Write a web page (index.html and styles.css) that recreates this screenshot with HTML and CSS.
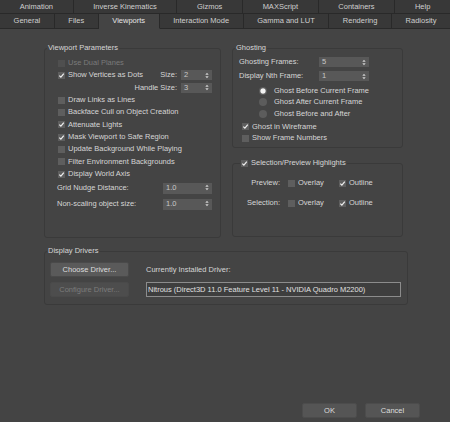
FILE: index.html
```html
<!DOCTYPE html>
<html lang="en">
<head>
  <meta charset="UTF-8">
  <title>Preference Settings - Viewports</title>
  <link rel="stylesheet" href="styles.css">
</head>
<body>

  <div class="tabs">
    <div class="tab-row">
      <div class="tab">Animation</div>
      <div class="tab">Inverse Kinematics</div>
      <div class="tab">Gizmos</div>
      <div class="tab">MAXScript</div>
      <div class="tab">Containers</div>
      <div class="tab">Help</div>
    </div>
    <div class="tab-row">
      <div class="tab">General</div>
      <div class="tab">Files</div>
      <div class="tab active">Viewports</div>
      <div class="tab">Interaction Mode</div>
      <div class="tab">Gamma and LUT</div>
      <div class="tab">Rendering</div>
      <div class="tab">Radiosity</div>
    </div>
  </div>

  <div class="content">
    <div class="top">

      <fieldset class="group viewport">
        <legend>Viewport Parameters</legend>
        <div class="vp-body">
          <div class="check-row disabled"><span class="box"></span>Use Dual Planes</div>
          <div class="check-row">
            <span class="box on"><svg viewBox="0 0 7 7"><path d="M1.3 3.6 2.9 5.1 5.8 1.7"/></svg></span>Show Vertices as Dots
            <span class="spin-label push">Size:</span>
            <span class="spinner small">2<i class="arrows"><svg viewBox="0 0 5 8"><path d="M2.5 0.5 4.6 3.2H0.4Z M2.5 7.5 4.6 4.8H0.4Z"/></svg></i></span>
          </div>
          <div class="check-row end">
            <span class="spin-label">Handle Size:</span>
            <span class="spinner small">3<i class="arrows"><svg viewBox="0 0 5 8"><path d="M2.5 0.5 4.6 3.2H0.4Z M2.5 7.5 4.6 4.8H0.4Z"/></svg></i></span>
          </div>
          <div class="check-row"><span class="box"></span>Draw Links as Lines</div>
          <div class="check-row"><span class="box"></span>Backface Cull on Object Creation</div>
          <div class="check-row"><span class="box on"><svg viewBox="0 0 7 7"><path d="M1.3 3.6 2.9 5.1 5.8 1.7"/></svg></span>Attenuate Lights</div>
          <div class="check-row"><span class="box on"><svg viewBox="0 0 7 7"><path d="M1.3 3.6 2.9 5.1 5.8 1.7"/></svg></span>Mask Viewport to Safe Region</div>
          <div class="check-row"><span class="box"></span>Update Background While Playing</div>
          <div class="check-row"><span class="box"></span>Filter Environment Backgrounds</div>
          <div class="check-row"><span class="box on"><svg viewBox="0 0 7 7"><path d="M1.3 3.6 2.9 5.1 5.8 1.7"/></svg></span>Display World Axis</div>
          <div class="field-row">
            <span>Grid Nudge Distance:</span>
            <span class="spinner wide">1.0<i class="arrows"><svg viewBox="0 0 5 8"><path d="M2.5 0.5 4.6 3.2H0.4Z M2.5 7.5 4.6 4.8H0.4Z"/></svg></i></span>
          </div>
          <div class="field-row">
            <span>Non-scaling object size:</span>
            <span class="spinner wide">1.0<i class="arrows"><svg viewBox="0 0 5 8"><path d="M2.5 0.5 4.6 3.2H0.4Z M2.5 7.5 4.6 4.8H0.4Z"/></svg></i></span>
          </div>
        </div>
      </fieldset>

      <div class="right-col">
        <fieldset class="group ghosting">
          <legend>Ghosting</legend>
          <div class="gh-body">
            <div class="gh-row">
              <span class="gh-label">Ghosting Frames:</span>
              <span class="spinner ghost">5<i class="arrows"><svg viewBox="0 0 5 8"><path d="M2.5 0.5 4.6 3.2H0.4Z M2.5 7.5 4.6 4.8H0.4Z"/></svg></i></span>
            </div>
            <div class="gh-row">
              <span class="gh-label">Display Nth Frame:</span>
              <span class="spinner ghost">1<i class="arrows"><svg viewBox="0 0 5 8"><path d="M2.5 0.5 4.6 3.2H0.4Z M2.5 7.5 4.6 4.8H0.4Z"/></svg></i></span>
            </div>
            <div class="radio-list">
              <div class="radio-row"><span class="radio on"></span>Ghost Before Current Frame</div>
              <div class="radio-row"><span class="radio"></span>Ghost After Current Frame</div>
              <div class="radio-row"><span class="radio"></span>Ghost Before and After</div>
            </div>
            <div class="gh-checks">
              <div class="check-row tight"><span class="box on"><svg viewBox="0 0 7 7"><path d="M1.3 3.6 2.9 5.1 5.8 1.7"/></svg></span>Ghost in Wireframe</div>
              <div class="check-row tight"><span class="box"></span>Show Frame Numbers</div>
            </div>
          </div>
        </fieldset>

        <fieldset class="group highlights">
          <legend><span class="box on"><svg viewBox="0 0 7 7"><path d="M1.3 3.6 2.9 5.1 5.8 1.7"/></svg></span>Selection/Preview Highlights</legend>
          <div class="hl-body">
            <div class="hl-row">
              <span class="hl-label">Preview:</span>
              <span class="opt"><span class="box"></span>Overlay</span>
              <span class="opt"><span class="box on"><svg viewBox="0 0 7 7"><path d="M1.3 3.6 2.9 5.1 5.8 1.7"/></svg></span>Outline</span>
            </div>
            <div class="hl-row">
              <span class="hl-label">Selection:</span>
              <span class="opt"><span class="box"></span>Overlay</span>
              <span class="opt"><span class="box on"><svg viewBox="0 0 7 7"><path d="M1.3 3.6 2.9 5.1 5.8 1.7"/></svg></span>Outline</span>
            </div>
          </div>
        </fieldset>
      </div>
    </div>

    <fieldset class="group drivers">
      <legend>Display Drivers</legend>
      <div class="dd-body">
        <button class="btn">Choose Driver...</button>
        <span class="dd-label">Currently Installed Driver:</span>
        <button class="btn" disabled>Configure Driver...</button>
        <input class="driver-field" type="text" readonly value="Nitrous (Direct3D 11.0 Feature Level 11 - NVIDIA Quadro M2200)">
      </div>
    </fieldset>
  </div>

  <div class="footer">
    <button class="btn dialog">OK</button>
    <button class="btn dialog">Cancel</button>
  </div>

</body>
</html>
```

FILE: styles.css
```css
/* dark preference dialog */
* {
  box-sizing: border-box;
}
body {
  margin: 0;
  height: 422px;
  display: flex;
  flex-direction: column;
  background-color: #444;
  color: #d6d6d6;
  font-family: "Liberation Sans", Arial, sans-serif;
  font-size: 7.5px;
  line-height: 10px;
  overflow: hidden;
}

/* tabs */
.tab-row {
  display: flex;
  height: 14px;
}
.tab-row + .tab-row {
  height: 15px;
}
.tab {
  flex: 1 1 auto;
  display: flex;
  align-items: center;
  justify-content: center;
  padding: 0 6px;
  background-color: #383838;
  border-right: 1px solid #292929;
  border-bottom: 1px solid #292929;
  color: #cfcfcf;
  white-space: nowrap;
}
.tab:last-child {
  border-right: none;
}
.tab.active {
  background-color: #444;
  border-bottom-color: #444;
  color: #e4e4e4;
}

/* group boxes */
.content {
  padding: 14px 0 0 44px;
}
.top {
  display: flex;
  align-items: flex-start;
}
.group {
  margin: 0;
  padding: 0;
  min-width: 0;
  border: 1px solid #3a3a3a;
  border-radius: 3px;
}
.group legend {
  display: flex;
  align-items: center;
  height: 10px;
  margin-left: 2px;
  padding: 0 1px;
  line-height: 10px;
}

/* checkboxes, radios, spinners */
.box {
  flex: none;
  position: relative;
  width: 7px;
  height: 7px;
  margin-right: 3px;
  background-color: #5e5e5e;
}
.box svg {
  display: block;
  width: 7px;
  height: 7px;
  fill: none;
  stroke: #efefef;
  stroke-width: 1.2;
}
.disabled {
  color: #7a7a7a;
}
.disabled .box {
  background-color: #4f4f4f;
}
.radio {
  flex: none;
  width: 8px;
  height: 8px;
  margin-right: 7px;
  border-radius: 50%;
  background-color: #5c5c5c;
}
.radio.on {
  background: radial-gradient(circle, #f2f2f2 0 2.2px, #8a8a8a 2.8px, #5c5c5c 3.4px);
}
.spinner {
  position: relative;
  display: flex;
  align-items: center;
  height: 10px;
  padding-left: 3px;
  background-color: #585858;
  color: #c8c8c8;
}
.spinner .arrows {
  position: absolute;
  right: 3px;
  top: 1.5px;
  width: 4px;
  height: 7px;
}
.spinner .arrows svg {
  display: block;
  width: 4px;
  height: 7px;
  fill: #d0d0d0;
}
.spinner.small {
  width: 31px;
}
.spinner.wide {
  width: 49px;
  height: 11px;
}
.spinner.ghost {
  width: 50px;
}

/* viewport parameters */
.viewport {
  width: 177px;
}
.vp-body {
  padding: 4px 8px 25px 13px;
}
.check-row {
  display: flex;
  align-items: center;
  height: 12.33px;
  white-space: nowrap;
}
.check-row.end {
  justify-content: flex-end;
}
.spin-label {
  margin-right: 4px;
}
.spin-label.push {
  margin-left: auto;
}
.field-row {
  display: flex;
  align-items: center;
  justify-content: space-between;
  height: 16px;
  margin-left: -1px;
}

/* ghosting */
.right-col {
  width: 171px;
  margin-left: 11px;
}
.gh-body {
  padding: 2px 6px 3px 6px;
}
.gh-row {
  display: flex;
  align-items: center;
  height: 14px;
}
.gh-label {
  width: 80px;
}
.radio-list {
  margin-top: 2px;
  padding-left: 20px;
}
.radio-row {
  display: flex;
  align-items: center;
  height: 11.5px;
}
.gh-checks {
  margin-top: 1.5px;
  padding-left: 3px;
}
.check-row.tight {
  height: 11.5px;
}

/* selection / preview highlights */
.highlights {
  margin-top: 10px;
}
.highlights legend {
  margin-left: 7px;
}
.hl-body {
  padding: 8px 0 26px 0;
}
.hl-row {
  display: flex;
  align-items: center;
  height: 14px;
}
.hl-row + .hl-row {
  margin-top: 6px;
}
.hl-label {
  width: 47px;
  margin-right: 8px;
  text-align: right;
}
.opt {
  display: flex;
  align-items: center;
  width: 51px;
}

/* display drivers */
.drivers {
  width: 364px;
  margin-top: 8px;
}
.dd-body {
  display: grid;
  grid-template-columns: 79px 255px;
  grid-template-rows: 15px 15px;
  column-gap: 17px;
  row-gap: 5px;
  padding: 6px 5px 7px 5px;
}
.dd-label {
  align-self: center;
}
.btn {
  height: 15px;
  padding: 0;
  border: 1px solid #4a4a4a;
  border-radius: 2px;
  background-color: #5a5a5a;
  color: #dedede;
  font: inherit;
}
.btn:disabled {
  background-color: #4d4d4d;
  color: #7c7c7c;
}
.driver-field {
  height: 15px;
  padding: 0 1px;
  border: 1px solid #8c8c8c;
  border-radius: 0;
  background-color: #3e3e3e;
  color: #e0e0e0;
  font: inherit;
  outline: none;
}

/* dialog buttons */
.footer {
  display: flex;
  justify-content: flex-end;
  gap: 8px;
  margin-top: auto;
  padding: 0 30px 4px 0;
}
.btn.dialog {
  width: 55px;
  background-color: #555;
  border-color: #4c4c4c;
}
```
